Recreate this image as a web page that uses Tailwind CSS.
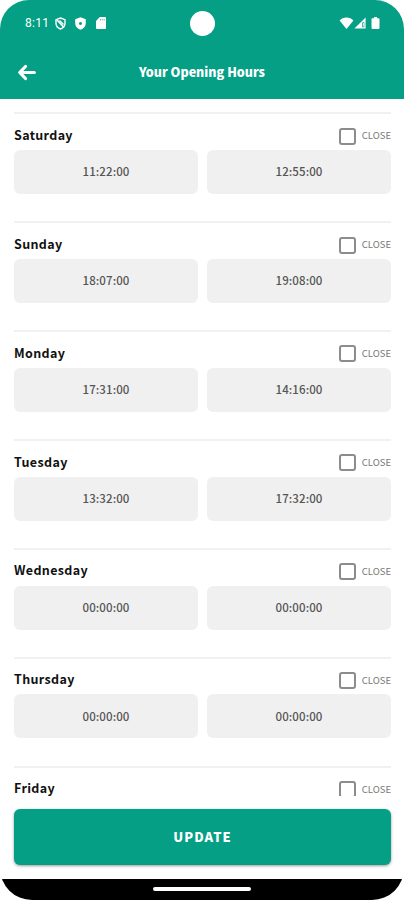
<!DOCTYPE html>
<html lang="en">
<head>
  <meta charset="UTF-8" />
  <meta name="viewport" content="width=device-width, initial-scale=1.0" />
  <title>Your Opening Hours</title>
  <script src="https://cdn.jsdelivr.net/npm/@tailwindcss/browser@4"></script>
  <style>
    body {
      font-family: 'Noto Sans CJK SC', 'Noto Sans', sans-serif;
    }
  </style>
</head>
<body class="bg-white">

  <div class="w-[404px] h-[900px] flex flex-col overflow-hidden bg-white rounded-t-[29px] rounded-b-[32px]">

    <!-- Header -->
    <header class="h-[98.5px] shrink-0 bg-[#049f85] text-white">
      <div class="h-[46px] flex items-center justify-between pl-[25px] pr-[24px]">
        <div class="w-[165px] flex items-center">
          <span class="w-[30px] text-[12px] leading-none tracking-[0.3px] font-[Roboto]">8:11</span>
          <svg class="w-[11px] h-[13px]" viewBox="0 0 11 13" fill="none" stroke="currentColor" stroke-width="1.4">
            <path d="M5.5 1 10 2.7v3.6c0 2.6-1.9 4.8-4.5 5.7C2.9 11.1 1 8.9 1 6.3V2.7z" />
            <path d="M2 3l6.5 7M4.5 3.5l4 4" />
          </svg>
          <svg class="ml-[9px] w-[11px] h-[13px]" viewBox="0 0 11 13" fill="currentColor">
            <path fill-rule="evenodd" d="M5.5.3 10.8 2.3v4c0 3-2.2 5.5-5.3 6.4C2.4 11.8.2 9.3.2 6.3v-4zM5.5 4.9a1.5 1.5 0 1 0 .01 0z" />
          </svg>
          <svg class="ml-[10px] w-[10px] h-[12px]" viewBox="0 0 10 12" fill="currentColor">
            <path fill-rule="evenodd" d="M3.8 0H9a1 1 0 0 1 1 1v10a1 1 0 0 1-1 1H1a1 1 0 0 1-1-1V4zM4 2v1.6h.6V2zM5.9 2v1.6h.6V2zM7.8 2v1.6h.6V2z" />
          </svg>
        </div>
        <span class="size-[25px] rounded-full bg-white"></span>
        <div class="w-[165px] flex items-center justify-end">
          <svg class="w-[15px] h-[12px]" viewBox="0 0 15 12" fill="currentColor">
            <path d="M7.5 12 .6 3.4C2.3 1.5 4.7.5 7.5.5s5.2 1 6.9 2.9z" />
          </svg>
          <svg class="w-[12px] h-[12px]" viewBox="0 0 12 12" fill="currentColor">
            <path fill-rule="evenodd" d="M11.6.4V11.6H.4zM8.3 5.3v5h2v-5z" />
            <path d="M9 6h.8v3.5H9z" />
          </svg>
          <svg class="ml-[5px] w-[9px] h-[12px]" viewBox="0 0 9 12" fill="currentColor">
            <path d="M3 0h3v1.3h1.7a.8.8 0 0 1 .8.8v9a.8.8 0 0 1-.8.8H1.3a.8.8 0 0 1-.8-.8v-9a.8.8 0 0 1 .8-.8H3z" />
          </svg>
        </div>
      </div>
      <div class="h-[52px] grid grid-cols-[40px_1fr_40px] items-center px-[17px]">
        <svg class="w-[20px] h-[17px]" viewBox="0 0 20 17" fill="none" stroke="currentColor" stroke-width="3.2" stroke-linecap="round" stroke-linejoin="round">
          <path d="M17.3 8.5H3M8.5 2.5 2.7 8.5l5.8 6" />
        </svg>
        <h1 class="pt-[1px] text-center text-[12.5px] leading-none font-black whitespace-nowrap">Your Opening Hours</h1>
      </div>
    </header>

    <!-- Days -->
    <main id="days" class="h-[697px] shrink-0 overflow-hidden pl-[14px] pr-[13px] pt-[13.8px]"></main>

    <!-- Update -->
    <div class="flex-1 pl-[14px] pr-[13px] pt-[13.5px]">
      <button class="block w-full h-[56px] pb-[1px] rounded-[6px] bg-[#049f85] text-white text-[13px] leading-none font-black tracking-[1.1px] shadow-[0_1px_3px_rgba(0,0,0,0.4)]">UPDATE</button>
    </div>

    <!-- System navigation -->
    <div class="h-[21px] shrink-0 bg-black flex justify-center pt-[8px]">
      <span class="w-[98px] h-[4px] rounded-full bg-white"></span>
    </div>
  </div>

  <script>
    const days = [
      { name: 'Saturday', hours: ['11:22:00', '12:55:00'] },
      { name: 'Sunday', hours: ['18:07:00', '19:08:00'] },
      { name: 'Monday', hours: ['17:31:00', '14:16:00'] },
      { name: 'Tuesday', hours: ['13:32:00', '17:32:00'] },
      { name: 'Wednesday', hours: ['00:00:00', '00:00:00'] },
      { name: 'Thursday', hours: ['00:00:00', '00:00:00'] },
      { name: 'Friday', hours: [] }
    ];

    document.getElementById('days').innerHTML = days.map(day => `
      <section class="h-[108.9px] border-t-2 border-[#f1f1f1]">
        <div class="h-[35.7px] pt-[8px] flex items-center justify-between">
          <h2 class="pb-[2px] text-[12.5px] leading-none font-bold tracking-[0.35px] text-[#111]">${day.name}</h2>
          <label class="flex items-center gap-[6px] text-[9.5px] leading-none text-[#777]">
            <span class="size-[17px] rounded-[3px] border-2 border-[#8c8c8c]"></span>
            CLOSE
          </label>
        </div>
        <div class="grid grid-cols-2 gap-[9px] text-[11.5px] leading-none font-medium tracking-[0.1px] text-[#555]">
          ${day.hours.map(time => `
          <div class="h-[44px] rounded-[6px] bg-[#f0f0f0] flex items-center justify-center">${time}</div>`).join('')}
        </div>
      </section>
    `).join('');
  </script>
</body>
</html>
